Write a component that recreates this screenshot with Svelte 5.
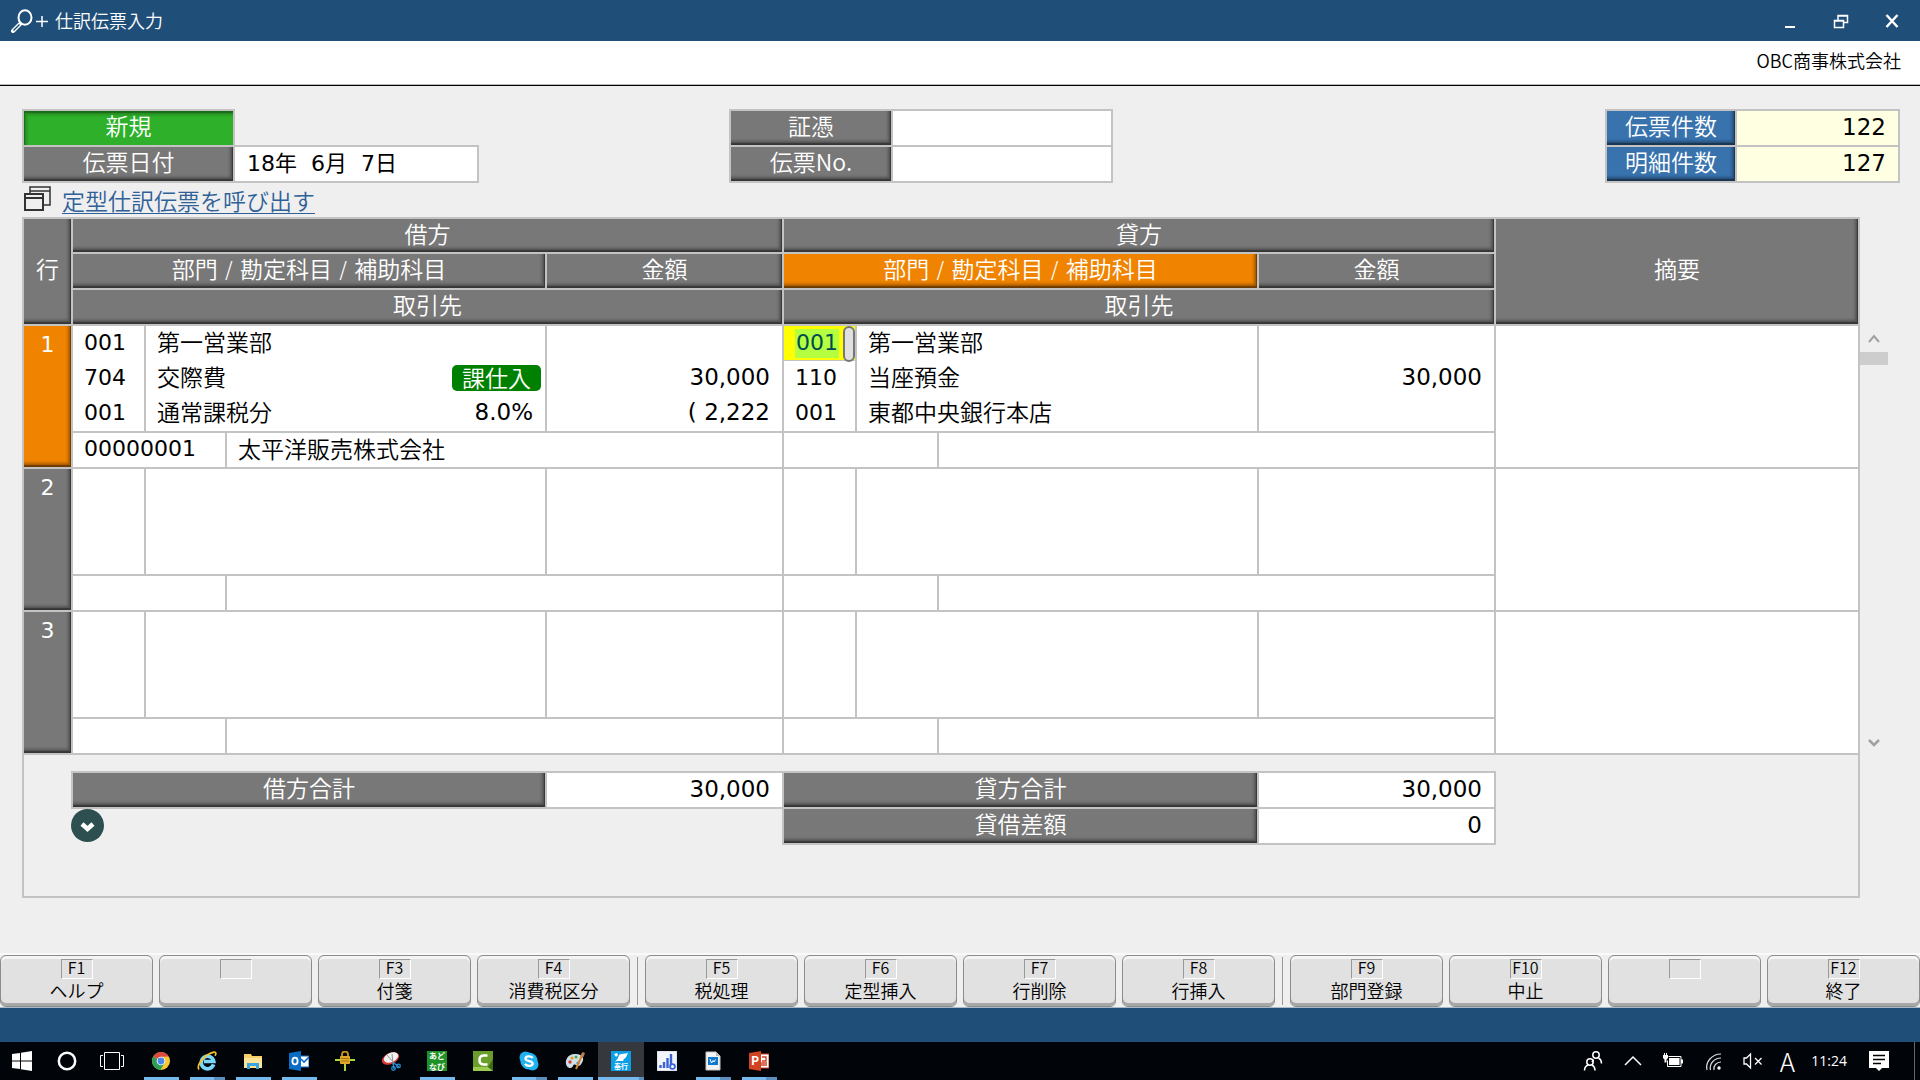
<script>
  let date = $state('18年\u00a0\u00a06月\u00a0\u00a07日');
  let voucher = $state('');
  let slipNo = $state('');
  let activeCode = $state('001');

  const rows = [
    {
      no: 1,
      active: true,
      debit: {
        codes: ['001', '704', '001'],
        names: ['第一営業部', '交際費', '通常課税分'],
        badge: '課仕入',
        rate: '8.0%',
        amounts: ['', '30,000', '( 2,222'],
        partnerCode: '00000001',
        partner: '太平洋販売株式会社',
      },
      credit: {
        codes: ['', '110', '001'],
        names: ['第一営業部', '当座預金', '東都中央銀行本店'],
        amounts: ['', '30,000', ''],
      },
    },
    { no: 2, debit: {}, credit: {} },
    { no: 3, debit: {}, credit: {} },
  ];

  const keyGroups = [
    [['F1', 'ヘルプ'], ['', ''], ['F3', '付箋'], ['F4', '消費税区分']],
    [['F5', '税処理'], ['F6', '定型挿入'], ['F7', '行削除'], ['F8', '行挿入']],
    [['F9', '部門登録'], ['F10', '中止'], ['', ''], ['F12', '終了']],
  ];

  const apps = [
    { id: 'chrome', name: 'Chrome', open: true },
    { id: 'ie', name: 'Internet Explorer', open: true, multi: true },
    { id: 'folder', name: 'エクスプローラー', open: true },
    { id: 'outlook', name: 'Outlook', open: true },
    { id: 'lock', name: 'ロック' },
    { id: 'snip', name: 'Snipping Tool' },
    { id: 'navi', name: 'あどなび', open: true },
    { id: 'camtasia', name: 'Camtasia' },
    { id: 'skype', name: 'Skype', open: true, multi: true },
    { id: 'paint', name: 'ペイント', open: true },
    { id: 'bugyo', name: '奉行', open: true, multi: true, current: true },
    { id: 'chart', name: 'モニター' },
    { id: 'doc', name: 'ビューアー', open: true, multi: true },
    { id: 'ppt', name: 'PowerPoint', open: true, multi: true },
  ];
</script>

{#snippet codeCell(side, active)}
  <td class="top">
    <div class="lines num">
      {#if active}
        <div class="line code-edit">
          <input class="code-input" aria-label="貸方 部門コード" bind:value={activeCode} />
          <span class="pill"></span>
        </div>
      {:else}
        <div class="line pad">{side.codes?.[0] ?? ''}</div>
      {/if}
      <div class="line pad">{side.codes?.[1] ?? ''}</div>
      <div class="line pad">{side.codes?.[2] ?? ''}</div>
    </div>
  </td>
  <td class="top" colspan="2">
    <div class="lines">
      <div class="line pad">{side.names?.[0] ?? ''}</div>
      <div class="line pad spread">
        <span>{side.names?.[1] ?? ''}</span>
        {#if side.badge}<span class="badge">{side.badge}</span>{/if}
      </div>
      <div class="line pad spread">
        <span>{side.names?.[2] ?? ''}</span>
        {#if side.rate}<span class="num rate">{side.rate}</span>{/if}
      </div>
    </div>
  </td>
  <td class="top">
    <div class="lines num right">
      {#each side.amounts ?? [] as a}<div class="line pad">{a}</div>{/each}
    </div>
  </td>
{/snippet}

{#snippet icon(id)}
  <svg viewBox="0 0 20 20" width="20" height="20" aria-hidden="true">
    {#if id === 'chrome'}
      <circle cx="10" cy="10" r="9" fill="#fbc92f" />
      <path d="M10 10 2.2 5.5A9 9 0 0 1 17.8 5.5L10 5.8z" fill="#dd4a3e" />
      <path d="M2.2 5.5A9 9 0 0 0 9.5 19l4-6.8L10 10z" fill="#2f9f57" />
      <circle cx="10" cy="10" r="4.3" fill="#fff" />
      <circle cx="10" cy="10" r="3.4" fill="#4a86ee" />
    {:else if id === 'ie'}
      <path d="M16.600 13.400A6.300 6.300 0 1 1 16.800 10.500H7" fill="none" stroke="#7ad6fa" stroke-width="3.600" />
      <path d="M2 18.500C-1 14 8 3 17 1.200c2.600-.4 2 2 1 3.600" fill="none" stroke="#f6c22c" stroke-width="1.700" />
    {:else if id === 'folder'}
      <path d="M1 3h7l1 2h10v12H1z" fill="#f7cf6b" />
      <path d="M1 7h18v10H1z" fill="#fde39a" />
      <path d="M4 18v-6h12v6h-3v-3H7v3z" fill="#3aa5dc" />
    {:else if id === 'outlook'}
      <path d="M11 5h9v11h-9z" fill="#fff" stroke="#0a6cc4" />
      <path d="m12 8 3 3 5-5" fill="none" stroke="#0a6cc4" stroke-width="1.600" />
      <path d="M0 2 12 0v20L0 18z" fill="#0a6cc4" />
      <ellipse cx="6" cy="10" rx="2.600" ry="3.400" fill="none" stroke="#fff" stroke-width="1.800" />
    {:else if id === 'lock'}
      <path d="M0 9h20M10 9v11" stroke="#a5d936" stroke-width="2" />
      <path d="M7 6V3.500a3 3 0 0 1 6 0V6" fill="none" stroke="#c89520" stroke-width="1.800" />
      <rect x="5" y="5" width="10" height="8" rx="1" fill="#e0ab2b" />
      <path d="M6 7.500h8M6 10h8" stroke="#a87412" />
    {:else if id === 'snip'}
      <ellipse cx="9.500" cy="7.500" rx="9" ry="5.600" transform="rotate(-24 9.500 7.500)" fill="#d93636" />
      <ellipse cx="10" cy="6.500" rx="7.600" ry="4.600" transform="rotate(-24 10 6.500)" fill="#f1f1f1" />
      <path d="m6 4 7 8M11 3l1 9" stroke="#8d979d" />
      <path d="m12 12 1 6m0-6 5 4" stroke="#2b8fd0" stroke-width="1.500" />
      <circle cx="12.500" cy="17.500" r="1.800" fill="none" stroke="#2b8fd0" stroke-width="1.300" />
      <circle cx="17.500" cy="15" r="1.800" fill="none" stroke="#2b8fd0" stroke-width="1.300" />
    {:else if id === 'navi'}
      <rect width="20" height="20" fill="#1e9226" />
      <text x="10" y="8" font-size="8" font-weight="700" fill="#fff" text-anchor="middle">あど</text>
      <text x="10" y="19" font-size="8" font-weight="700" fill="#fff" text-anchor="middle">なび</text>
    {:else if id === 'camtasia'}
      <rect width="20" height="20" fill="#6a9e2b" />
      <path d="M0 16h15l5 4H0z" fill="#9ccb52" />
      <path d="M15 16 20 8v12z" fill="#3f6b14" />
      <path d="M14.500 4.500H11q-4.500 0-4.500 4.500t4.500 4.500h3.500" fill="none" stroke="#fff" stroke-width="2.600" />
    {:else if id === 'skype'}
      <circle cx="6.500" cy="6.500" r="6" fill="#1fb1f0" />
      <circle cx="13.500" cy="13.500" r="6" fill="#1fb1f0" />
      <circle cx="10" cy="10" r="8.600" fill="#1fb1f0" />
      <path d="M13.800 7C12 4.700 6.500 4.800 6.500 7.600c0 3.200 7.200 1.800 7.200 4.900 0 3-6 3-7.700.300" fill="none" stroke="#fff" stroke-width="2.300" />
    {:else if id === 'paint'}
      <path d="M11 3C4 2 0 8 1 13c1 5 6 5 7 2s3-1 5 0 6-5 5-8-4-4-7-4z" fill="#cfe0ea" />
      <circle cx="5" cy="11" r="1.700" fill="#d83a32" />
      <circle cx="7" cy="7" r="1.600" fill="#e89b2a" />
      <circle cx="11" cy="6" r="1.500" fill="#4ba648" />
      <circle cx="13" cy="12" r="1.600" fill="#3a7fd0" />
      <path d="M18 2 11 18" stroke="#d9822b" stroke-width="2" />
      <path d="m16 5 1.500-4 2.500 1-1.500 4z" fill="#b9824f" />
    {:else if id === 'bugyo'}
      <rect width="20" height="20" fill="#0b9fe8" />
      <path d="M3 3l3-1 1 2-2 2zM8 4c3-2 6-1 9-2-1 2-2 5-4 6l-1 2H6l-2 1 3-4z" fill="#fff" />
      <text x="10" y="18" font-size="7" font-weight="700" fill="#fff" text-anchor="middle">奉行</text>
    {:else if id === 'chart'}
      <rect width="20" height="20" fill="#f3f5fb" stroke="#c9cfdf" />
      <path d="M3.500 17v-3M7 17v-6M10.500 17V7M14 14V3" stroke="#3a62d8" stroke-width="2.400" />
      <circle cx="15.500" cy="15.500" r="2.400" fill="#fff" stroke="#3a62d8" stroke-width="1.800" />
    {:else if id === 'doc'}
      <path d="M3 1h10l4 4v14H3z" fill="#f4f4f4" stroke="#c4c4c4" />
      <path d="M13 1v4h4" fill="#bbb" />
      <rect x="5" y="6" width="10" height="8" fill="#0e78cf" />
      <path d="m7 8 1.500 4L10 9.500l1 1.500 1.500-2.500" fill="none" stroke="#fff" />
    {:else if id === 'ppt'}
      <rect x="10" y="3" width="10" height="14" fill="#fff" stroke="#d04423" />
      <path d="M13 6h4v4h-4M12 12h6M12 14h6" fill="none" stroke="#d04423" stroke-width="1.400" />
      <path d="M0 2 12 0v20L0 18z" fill="#d04423" />
      <text x="6" y="14" font-size="12" font-weight="700" fill="#fff" text-anchor="middle">P</text>
    {/if}
  </svg>
{/snippet}

<div class="window">
  <header class="titlebar">
    <svg class="lens" viewBox="0 0 40 24" width="40" height="24" aria-hidden="true">
      <g fill="none" stroke="#fff" stroke-width="2">
        <ellipse cx="17" cy="8.500" rx="6.500" ry="7.300" />
        <path d="m12 15-7 7" stroke-width="4" stroke-linecap="round" />
        <path d="m11.500 15.500-6 6" stroke="#1f4e79" stroke-width="1.500" />
        <path d="M28 12.500h12M34 7v11" stroke-width="1.500" />
      </g>
    </svg>
    <h1>仕訳伝票入力</h1>
    <div class="controls">
      <button aria-label="最小化"><svg viewBox="0 0 16 16" width="16" height="16"><path d="M3 14h10" stroke="#fff" stroke-width="2" /></svg></button>
      <button aria-label="元に戻す"><svg viewBox="0 0 16 16" width="16" height="16"><path d="M1.500 7.500h9v7h-9zM1 8h10M5 7V2.500h9.500v7H11M5 3h10" fill="none" stroke="#fff" stroke-width="1.500" /></svg></button>
      <button aria-label="閉じる"><svg viewBox="0 0 16 16" width="16" height="16"><path d="m2.500 2 11 12m0-12-11 12" stroke="#fff" stroke-width="2.500" /></svg></button>
    </div>
  </header>
  <div class="company">OBC商事株式会社</div>

  <main>
    <section class="summary">
      <div class="slip">
        <div class="cap green">新規</div>
        <div class="slip-date">
          <label class="cap" for="date">伝票日付</label>
          <input id="date" class="num" bind:value={date} />
        </div>
      </div>
      <div class="box mid">
        <label class="cap" for="voucher">証憑</label>
        <input id="voucher" bind:value={voucher} />
        <label class="cap" for="slipno">伝票No.</label>
        <input id="slipno" bind:value={slipNo} />
      </div>
      <div class="box counts">
        <div class="cap blue">伝票件数</div>
        <output class="num">122</output>
        <div class="cap blue">明細件数</div>
        <output class="num">127</output>
      </div>
    </section>

    <div class="template">
      <svg viewBox="0 0 27 25" width="27" height="25" aria-hidden="true">
        <g fill="#efefef" stroke="#333" stroke-width="1.500">
          <path d="M6 1h20v18H6zM6 5h20" />
          <path d="M1 8h18v16H1zM1 12h18" stroke-width="2" />
        </g>
      </svg>
      <a href="#template">定型仕訳伝票を呼び出す</a>
    </div>

    <div class="journal">
      <div class="sheet">
        <table>
          <colgroup>
            <col class="c-no" /><col class="c-code" /><col class="c-sub" /><col class="c-name" /><col class="c-amt" />
            <col class="c-code" /><col class="c-sub2" /><col class="c-name" /><col class="c-amt" /><col />
          </colgroup>
          <thead>
            <tr class="h1">
              <th class="cap tall" rowspan="3">行</th>
              <th class="cap" colspan="4">借方</th>
              <th class="cap" colspan="4">貸方</th>
              <th class="cap tall" rowspan="3">摘要</th>
            </tr>
            <tr>
              <th class="cap" colspan="3">部門 / 勘定科目 / 補助科目</th>
              <th class="cap">金額</th>
              <th class="cap orange" colspan="3">部門 / 勘定科目 / 補助科目</th>
              <th class="cap">金額</th>
            </tr>
            <tr>
              <th class="cap" colspan="4">取引先</th>
              <th class="cap" colspan="4">取引先</th>
            </tr>
          </thead>
          <tbody>
            {#each rows as row}
              <tr class="main-row">
                <th class="cap rowno num" class:orange={row.active} rowspan="2">{row.no}</th>
                {@render codeCell(row.debit, false)}
                {@render codeCell(row.credit, row.active)}
                <td rowspan="2"></td>
              </tr>
              <tr class="partner">
                <td class="num pad" colspan="2">{row.debit.partnerCode ?? ''}</td>
                <td class="pad" colspan="2">{row.debit.partner ?? ''}</td>
                <td colspan="2"></td>
                <td colspan="2"></td>
              </tr>
            {/each}
          </tbody>
        </table>

        <div class="totals">
          <div>
            <div class="box debit-total">
              <div class="cap">借方合計</div>
              <output class="num">30,000</output>
            </div>
            <button class="expand" aria-label="展開">
              <svg viewBox="0 0 33 33" width="33" height="33"><path d="m11 15 5.500 5 5.500-5" fill="none" stroke="#fff" stroke-width="4.500" /></svg>
            </button>
          </div>
          <div class="box credit-total">
            <div class="cap">貸方合計</div>
            <output class="num">30,000</output>
            <div class="cap">貸借差額</div>
            <output class="num">0</output>
          </div>
        </div>
      </div>

      <div class="scroller">
        <button aria-label="上へ"><svg viewBox="0 0 12 10" width="12" height="10"><path d="m1 8 5-6 5 6" fill="none" stroke="#a0a0a0" stroke-width="2" /></svg></button>
        <div class="thumb"></div>
        <button class="down" aria-label="下へ"><svg viewBox="0 0 12 10" width="12" height="10"><path d="m1 2 5 5 5-5" fill="none" stroke="#a0a0a0" stroke-width="2.500" /></svg></button>
      </div>
    </div>
  </main>

  <nav class="fkeys">
    {#each keyGroups as group}
      <div class="group">
        {#each group as [key, label]}
          <button aria-label={label || '未割当'}><kbd>{key}</kbd><span>{label}</span></button>
        {/each}
      </div>
    {/each}
  </nav>
  <div class="statusbar"></div>

  <footer class="taskbar">
    <div class="system">
      <button aria-label="スタート"><svg viewBox="0 0 20 20" width="20" height="20"><path d="M0 3l8-1v7.500H0zM9 1.800 20 0v9.500H9zM0 10.500h8V18l-8-1zM9 10.500h11V20L9 18.200z" fill="#fff" /></svg></button>
      <button aria-label="検索"><svg viewBox="0 0 20 20" width="20" height="20"><circle cx="10" cy="10" r="8.200" fill="none" stroke="#fff" stroke-width="2.500" /></svg></button>
      <button aria-label="タスクビュー"><svg viewBox="0 0 24 20" width="24" height="20"><path d="M4.500 1.500h15v17h-15zM3 4.500H.500v11H3M21 4.500h2.500v11H21" fill="none" stroke="#fff" /></svg></button>
    </div>
    <div class="apps">
      {#each apps as app}
        <button class:open={app.open} class:multi={app.multi} class:current={app.current} aria-label={app.name}>{@render icon(app.id)}</button>
      {/each}
    </div>
    <div class="tray">
      <svg viewBox="0 0 20 20" width="20" height="20"><g fill="none" stroke="#fff" stroke-width="1.500"><circle cx="13" cy="4" r="3.200" /><path d="M10.500 8.500 9 11M15.500 7q3 1.500 3 5.500" /><circle cx="7" cy="11" r="3.200" /><path d="M1.500 19.500q0-4 3.500-5.500M9 14q3 1.500 3 5.500" /></g></svg>
      <svg viewBox="0 0 20 20" width="20" height="20"><path d="m2 14 8-8 8 8" fill="none" stroke="#fff" stroke-width="1.500" /></svg>
      <svg viewBox="0 0 20 20" width="20" height="20"><path d="M5.500 5.500h12.500v10H4.500v-6" fill="none" stroke="#fff" /><path d="M6 7h10.500v7H6zM18 8.500h2v4h-2zM0 4h5v3L3.500 8.500v3h-2v-3L0 7zM1 2h1v2H1zM3 2h1v2H3z" fill="#fff" /></svg>
      <svg viewBox="0 0 20 20" width="20" height="20"><g fill="none" stroke="#ddd" stroke-width="1.200"><path d="M4 19C2 11 9 3 18 3" /><path d="M7.500 19C6 13 11 7 18 7" /><path d="M11 19c-1-4 2.500-8 7-8" /></g><circle cx="16" cy="17" r="1.700" fill="#fff" /></svg>
      <svg viewBox="0 0 20 20" width="20" height="20"><path d="M1 7h2.500l4-4v14l-4-4H1zM12 7l6.500 6.500M18.500 7 12 13.500" fill="none" stroke="#fff" stroke-width="1.300" /></svg>
      <span class="ime">A</span>
      <time>11:24</time>
      <svg viewBox="0 0 20 20" width="20" height="20"><path d="M0 0h20v17h-7l-3 3-3-3H0z" fill="#fff" /><path d="M4 4.500h12M4 8.500h12M4 12.500h8" stroke="#000" stroke-width="1.300" /></svg>
    </div>
  </footer>
</div>

<style>
  :global(body) {
    margin: 0;
  }
  .window {
    display: flex;
    flex-direction: column;
    min-height: 100vh;
    background: #efefef;
    color: #000;
    font: 350 23px/34px 'Noto Sans CJK JP', sans-serif;
  }
  .window :global(*) {
    box-sizing: border-box;
  }
  button {
    padding: 0;
    border: 0;
    background: none;
    color: inherit;
    font: inherit;
  }
  svg {
    display: block;
    flex: none;
  }
  .num {
    font-family: 'DejaVu Sans', 'Noto Sans CJK JP', sans-serif;
    font-size: 22px;
    font-weight: 400;
  }

  .titlebar {
    display: flex;
    align-items: center;
    height: 41px;
    padding: 0 3px 0 8px;
    background: #1f4e79;
    color: #fff;
  }
  h1 {
    margin: 0 0 0 7px;
    padding-bottom: 2px;
    font-size: 18px;
    font-weight: 350;
  }
  .controls {
    display: flex;
    margin-left: auto;
  }
  .controls button {
    display: grid;
    place-items: center;
    width: 51px;
    height: 41px;
  }
  .company {
    height: 45px;
    padding: 2px 19px 0 0;
    border-bottom: 1px solid #000;
    box-shadow: inset 0 -1px #bbb;
    background: #fff;
    font-size: 18px;
    text-align: right;
  }

  main {
    flex: 1;
    padding: 23px 0 0 22px;
  }
  .summary {
    display: flex;
    align-items: flex-start;
    padding-right: 20px;
  }
  .cap {
    background: #787878;
    box-shadow:
      inset -1px -2px 1px rgba(0, 0, 0, 0.35),
      inset -3px -4px 3px rgba(0, 0, 0, 0.3);
    color: #fff;
    font-weight: 350;
    line-height: 29px;
    text-align: center;
  }
  .cap.green {
    width: 213px;
    height: 36px;
    border: 2px solid #c3c3c3;
    border-bottom: 0;
    background: #2eb02a;
    box-shadow:
      inset 1px 2px 1px rgba(0, 0, 0, 0.25),
      inset 3px 4px 3px rgba(0, 0, 0, 0.2);
  }
  .cap.blue {
    background: #3873ae;
  }
  .cap.orange {
    background: #f08300;
  }
  .slip-date,
  .box {
    display: grid;
    gap: 2px;
    padding: 2px;
    background: #c3c3c3;
    grid-auto-rows: 34px;
  }
  .slip-date {
    grid-template-columns: 209px 242px;
  }
  .mid {
    grid-template-columns: 160px 218px;
    margin-left: 250px;
  }
  .counts {
    grid-template-columns: 128px 161px;
    margin-left: auto;
  }
  input {
    width: 100%;
    min-width: 0;
    height: 34px;
    padding: 0 0 6px 12px;
    border: 0;
    border-radius: 0;
    outline: 0;
    background: #fff;
    color: #000;
  }
  output {
    padding-right: 12px;
    background: #fff;
    line-height: 32px;
    text-align: right;
  }
  output.num,
  .right,
  .num.rate {
    font-size: 23px;
  }
  .counts output {
    background: #ffffe1;
  }

  .template {
    display: flex;
    align-items: center;
    gap: 11px;
    height: 34px;
    padding-left: 2px;
  }
  .template svg {
    margin-bottom: 4px;
  }
  a {
    color: #2f6199;
    text-decoration-thickness: 1px;
    text-underline-offset: 3px;
  }

  .journal {
    display: flex;
    padding-right: 32px;
  }
  .sheet {
    flex: 1;
  }
  table {
    width: 100%;
    table-layout: fixed;
    border-spacing: 2px;
    background: #c3c3c3;
  }
  th,
  td {
    height: 34px;
    padding: 0 0 2px;
    line-height: 32px;
    white-space: nowrap;
  }
  thead .cap {
    font-family: 'DejaVu Sans', 'Noto Sans CJK JP', sans-serif;
    line-height: 32px;
  }
  .h1 th {
    height: 33px;
    padding-bottom: 1px;
  }
  .h1 .tall {
    padding-bottom: 4px;
  }
  td {
    background: #fff;
  }
  .partner .pad {
    padding-bottom: 4px;
    line-height: 30px;
  }
  .partner .num {
    padding-bottom: 2px;
    line-height: 32px;
  }
  .c-no {
    width: 47px;
  }
  .c-code {
    width: 71px;
  }
  .c-sub {
    width: 79px;
  }
  .c-sub2 {
    width: 80px;
  }
  .c-name {
    width: 318px;
  }
  .c-amt {
    width: 235px;
  }
  .main-row td {
    height: 105px;
    padding: 0;
  }
  .top {
    vertical-align: top;
  }
  .cap.rowno {
    padding-top: 2px;
    font-weight: 400;
    line-height: 34px;
    vertical-align: top;
  }
  .line {
    height: 35px;
    line-height: 30px;
  }
  .num .line {
    line-height: 33px;
  }
  .pad {
    padding-left: 11px;
  }
  .right {
    padding-right: 12px;
    text-align: right;
  }
  .spread {
    display: flex;
    justify-content: space-between;
    padding-right: 4px;
  }
  .badge {
    height: 26px;
    margin-top: 4px;
    padding: 0 10px;
    border-radius: 5px;
    background: #008000;
    color: #fff;
    line-height: 24px;
  }
  .rate {
    padding-right: 8px;
    line-height: 33px;
  }
  .code-edit {
    display: flex;
    position: relative;
    background: #ff0;
    border-bottom: 1px solid #c3c3c3;
  }
  .code-input {
    width: 44px;
    height: 29px;
    margin: 3px 0 0 11px;
    padding: 0 1px 3px;
    background: #b3ff40;
    color: #004b50;
    font: inherit;
    line-height: 26px;
  }
  .pill {
    position: absolute;
    top: 0;
    right: 0;
    width: 12px;
    height: 36px;
    border: 2px solid #777;
    border-radius: 6px;
    background: #e0e0e0;
  }

  .totals {
    display: flex;
    align-items: flex-start;
    height: 143px;
    padding: 16px 0 0 47px;
    border: 2px solid #c3c3c3;
    border-top: 0;
  }
  .debit-total {
    grid-template-columns: 472px 235px;
  }
  .credit-total {
    grid-template-columns: 473px 235px;
    margin-left: -2px;
  }
  .expand {
    display: block;
    border-radius: 50%;
    background: #2d4f4f;
  }

  .scroller {
    display: flex;
    flex-direction: column;
    align-items: center;
    width: 28px;
    height: 430px;
    margin-top: 109px;
  }
  .scroller button {
    padding: 8px 0;
  }
  .thumb {
    width: 28px;
    height: 13px;
    background: #cdcdcd;
  }
  .scroller .down {
    margin-top: auto;
  }

  .fkeys {
    display: flex;
    gap: 15px;
    height: 54px;
    border-top: 2px solid #f9f9f9;
    font-size: 18px;
  }
  .group {
    position: relative;
    display: flex;
    flex: 1;
    gap: 6px;
  }
  .group + .group::before {
    content: '';
    position: absolute;
    top: 2px;
    bottom: 2px;
    left: -8px;
    width: 1px;
    background: #999;
  }
  .group button {
    display: flex;
    flex: 1 1 0;
    flex-direction: column;
    align-items: center;
    height: 52px;
    padding-top: 3px;
    border: 1px solid #8c8c8c;
    border-radius: 6px;
    background: #e1e1e1;
    box-shadow:
      inset 0 3px #f4f4f4,
      inset 0 -3px #a8a8a8;
    line-height: 23px;
  }
  kbd {
    width: 32px;
    height: 20px;
    border: 1px solid;
    border-color: #999 #fff #fff #999;
    font: 350 16px/15px 'Noto Sans CJK JP', sans-serif;
    text-align: center;
  }
  .statusbar {
    height: 35px;
    border-top: 1px solid #a9b9c9;
    background: #1f4e79;
  }

  .taskbar {
    display: flex;
    height: 38px;
    background: #010409;
    color: #fff;
  }
  .system,
  .apps {
    display: flex;
  }
  .system {
    margin-right: 3px;
  }
  .taskbar button {
    position: relative;
    display: grid;
    place-items: center;
    width: 46px;
    height: 38px;
  }
  .taskbar .system button {
    width: 45px;
    padding-right: 1px;
  }
  .apps .open::after {
    content: '';
    position: absolute;
    bottom: 0;
    left: 6px;
    right: 5px;
    height: 3px;
    background: #76b9ed;
  }
  .apps .multi::after {
    background: linear-gradient(to right, #76b9ed 70%, #5c8fbd 70%);
  }
  .apps .current {
    background: #35383c;
  }
  .apps .current::after {
    left: 0;
    right: 0;
    background: linear-gradient(to right, #76b9ed 90%, #5c8fbd 90%);
  }
  .tray {
    display: flex;
    align-items: center;
    gap: 20px;
    margin: 0 5px 0 auto;
    padding-right: 25px;
    border-right: 1px solid #666;
  }
  .ime {
    width: 16px;
    margin: 0 -4px;
    font-size: 26px;
    font-weight: 300;
    text-align: center;
  }
  time {
    margin-right: 2px;
    font-family: 'Open Sans', sans-serif;
    font-size: 14px;
    font-weight: 400;
  }
</style>
